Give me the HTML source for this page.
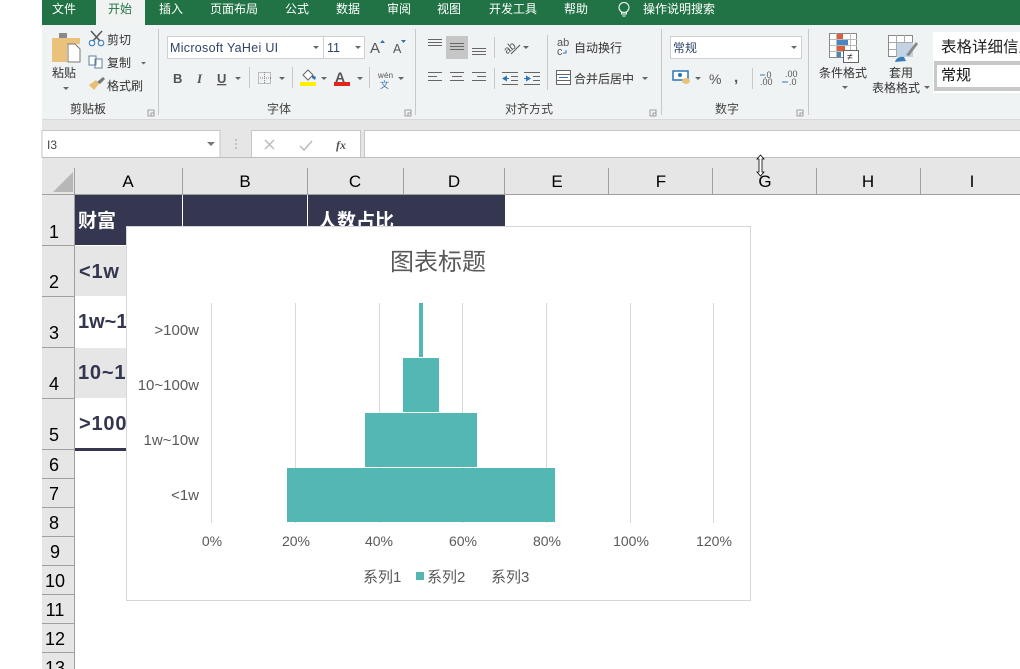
<!DOCTYPE html>
<html><head><meta charset="utf-8"><style>
html,body{margin:0;padding:0;background:#fff;width:1020px;height:669px;overflow:hidden}
svg{display:block}
text{font-family:"Liberation Sans","Noto Sans CJK SC",sans-serif;font-size:12px;fill:#444}
.tab{fill:#fff;font-size:12px;text-anchor:middle}
.s{font-size:12px;fill:#333}
.g{font-size:12px;fill:#444;text-anchor:middle}
.h{font-size:17px;fill:#000;text-anchor:middle}
.r{font-size:18px;fill:#000;text-anchor:middle}
.b{font-size:20px;font-weight:bold;fill:#33364f}
.c{font-size:15px;fill:#595959;text-anchor:end}
.x{font-size:14px;fill:#595959;text-anchor:middle}
.l{stroke:#666;stroke-width:1;fill:none}
.sep{stroke:#c8c8c8;stroke-width:1}
.hl{stroke:#9f9f9f;stroke-width:1}
.dd{fill:#666}
</style></head><body>
<svg width="1020" height="669" viewBox="0 0 1020 669" xmlns="http://www.w3.org/2000/svg">
<rect width="1020" height="669" fill="#fff"/>
<!-- title bar -->
<rect x="42" y="0" width="978" height="25" fill="#217346"/>
<rect x="96" y="0" width="49" height="25" fill="#f1f3f2"/>
<text class="tab" x="64" y="13">文件</text>
<text class="tab" x="120" y="13" style="fill:#217346">开始</text>
<text class="tab" x="171" y="13">插入</text>
<text class="tab" x="234" y="13">页面布局</text>
<text class="tab" x="297" y="13">公式</text>
<text class="tab" x="348" y="13">数据</text>
<text class="tab" x="399" y="13">审阅</text>
<text class="tab" x="449" y="13">视图</text>
<text class="tab" x="513" y="13">开发工具</text>
<text class="tab" x="576" y="13">帮助</text>
<circle cx="624" cy="7.500" r="5" fill="none" stroke="#fff"/><path d="M621.500 12v2h5v-2M622.500 16h3" stroke="#fff" fill="none"/>
<text class="tab" x="679" y="13">操作说明搜索</text>
<!-- ribbon -->
<rect x="42" y="25" width="978" height="94" fill="#f0f3f3"/>
<rect x="42" y="119" width="978" height="11" fill="#e6e6e6"/>
<line x1="42" y1="119.500" x2="1020" y2="119.500" stroke="#d8d8d8"/>
<g class="sep">
<line x1="158.500" y1="29" x2="158.500" y2="115"/><line x1="415.500" y1="29" x2="415.500" y2="115"/><line x1="661.500" y1="29" x2="661.500" y2="115"/><line x1="808.500" y1="29" x2="808.500" y2="115"/>
<line x1="249.500" y1="67" x2="249.500" y2="88"/><line x1="292.500" y1="67" x2="292.500" y2="88"/><line x1="369.500" y1="67" x2="369.500" y2="88"/>
<line x1="494.500" y1="37" x2="494.500" y2="58"/><line x1="494.500" y1="68" x2="494.500" y2="89"/><line x1="547.500" y1="35" x2="547.500" y2="90"/><line x1="752.500" y1="68" x2="752.500" y2="89"/>
</g>
<!-- clipboard -->
<path d="M52 38h7v-4h8v4h13v6H67v18H52z" fill="#eac27c"/><rect x="59" y="33" width="8" height="5" fill="#8a8a8a"/>
<path d="M68 44h7l5 5v13H68z" fill="#fff" stroke="#777"/>
<text class="s" x="64" y="77" text-anchor="middle" style="font-size:12px">粘贴</text>
<path d="M63 87h6l-3 3z" class="dd"/>
<path d="M91 31l9 10M102 31l-9 10" stroke="#555" stroke-width="1.500"/><circle cx="92" cy="43" r="2.800" fill="none" stroke="#2e75b6"/><circle cx="101" cy="43" r="2.800" fill="none" stroke="#2e75b6"/>
<text class="s" x="107" y="44">剪切</text>
<path d="M89 56h7v9h-7zM95 59h7v9h-7z" fill="#fff" stroke="#5f7f9f"/>
<text class="s" x="107" y="67">复制</text><path d="M141 62h5l-2.500 2.500z" class="dd"/>
<path d="M89 85l7-5 3 4-5 6z" fill="#e8c070"/><path d="M97 82l6-5 2 2-5 5z" fill="#777"/>
<text class="s" x="107" y="90">格式刷</text>
<text class="s" x="70" y="113">剪贴板</text>
<path d="M148 110h6v6h-6z M151 113h3v3h-3z" fill="none" stroke="#888" stroke-width=".8"/>
<!-- font -->
<rect x="167.500" y="36.500" width="156" height="22" fill="#fff" stroke="#d0d0d0"/>
<rect x="323.500" y="36.500" width="41" height="22" fill="#fff" stroke="#d0d0d0"/>
<text x="170" y="52" style="font-size:12.500px;fill:#2f4468;letter-spacing:.3px">Microsoft YaHei UI</text><path d="M313 46h6l-3 3z" class="dd"/>
<text x="327" y="52" style="font-size:12.500px;fill:#2f4468">11</text><path d="M355 46h6l-3 3z" class="dd"/>
<text x="370" y="53" style="font-size:15px;fill:#555">A</text><path d="M380 43h5l-2.500-3z" fill="#2e75b6"/>
<text x="393" y="53" style="font-size:12.500px;fill:#555">A</text><path d="M401 40h5l-2.500 3z" fill="#2e75b6"/>
<text x="173" y="83" style="font-size:13px;font-weight:bold;fill:#555">B</text>
<text x="197" y="83" style="font-size:13px;font-style:italic;font-family:'Liberation Serif',serif;fill:#555;font-weight:bold">I</text>
<text x="217" y="83" style="font-size:13px;fill:#555;font-weight:bold;text-decoration:underline">U</text>
<path d="M235 77h6l-3 3z M279 77h6l-3 3z M321 77h6l-3 3z M357 77h6l-3 3z M398 77h6l-3 3z" class="dd"/>
<rect x="258.500" y="72.500" width="12" height="11" fill="none" stroke="#888" stroke-dasharray="1 1"/><path d="M264.500 72v12M258 78h13" stroke="#888" stroke-dasharray="1 1"/>
<path d="M303 75l5-5 5 5-5 5z" fill="#fff" stroke="#666"/><path d="M312 75l4 2-1 3-3-2z" fill="#2e75b6"/>
<rect x="300" y="82" width="16" height="4" fill="#ffee00"/>
<text x="335" y="82" style="font-size:14px;font-weight:bold;fill:#555">A</text><rect x="334" y="82" width="16" height="4" fill="#e0261c"/>
<text x="378" y="78" style="font-size:8px;fill:#555;letter-spacing:.2px">wén</text><text x="380" y="88" style="font-size:9px;fill:#2e75b6">文</text>
<text class="g" x="279" y="113">字体</text>
<path d="M405 110h6v6h-6z M408 113h3v3h-3z" fill="none" stroke="#888" stroke-width=".8"/>
<!-- alignment -->
<rect x="446" y="36" width="22" height="23" fill="#c6c6c6"/>
<g class="l">
<path d="M428 39.500h14M428 42.500h14M428 45.500h14"/>
<path d="M450 43.500h14M450 46.500h14M450 49.500h14"/>
<path d="M472 48.500h14M472 51.500h14M472 54.500h14"/>
<path d="M428 72.500h14M428 76.500h9M428 80.500h14"/>
<path d="M450 72.500h14M452 76.500h10M450 80.500h14"/>
<path d="M472 72.500h14M477 76.500h9M472 80.500h14"/>
<path d="M502 72.500h16M511 76.500h7M511 80.500h7M502 84.500h16"/>
<path d="M524 72.500h16M533 76.500h7M533 80.500h7M524 84.500h16"/>
</g>
<path d="M502 78.500l5-3v6z" fill="#2e75b6"/><path d="M503 78h6v1h-6z" fill="#2e75b6"/>
<path d="M531 78.500l-5-3v6z" fill="#2e75b6"/><path d="M524 78h6v1h-6z" fill="#2e75b6"/>
<text x="503" y="51" style="font-size:11px;fill:#555" transform="rotate(-38 510 47)">ab</text><path d="M511 54l9-9" stroke="#555"/>
<path d="M523 46h6l-3 3z M642 77h6l-3 3z" class="dd"/>
<text x="557" y="46" style="font-size:11px;fill:#555">ab</text><text x="557" y="55" style="font-size:11px;fill:#555">c</text><path d="M566 50v3h-3" stroke="#2e75b6" fill="none"/>
<text class="s" x="574" y="52">自动换行</text>
<rect x="556.500" y="70.500" width="14" height="14" fill="#fff" stroke="#666"/><path d="M557 74.500h13M557 80.500h13" stroke="#666"/><path d="M559 77.500h9" stroke="#2e75b6"/>
<text class="s" x="574" y="83">合并后居中</text>
<text class="g" x="529" y="113">对齐方式</text>
<path d="M650 110h6v6h-6z M653 113h3v3h-3z" fill="none" stroke="#888" stroke-width=".8"/>
<!-- number -->
<rect x="670.500" y="36.500" width="131" height="22" fill="#fff" stroke="#d0d0d0"/>
<text x="673" y="52" style="fill:#2f4468">常规</text><path d="M791 46h6l-3 3z" class="dd"/>
<rect x="673" y="71" width="15" height="9" fill="#fff" stroke="#2e75b6" stroke-width="1.500"/><circle cx="680" cy="75" r="2" fill="#2e75b6"/><ellipse cx="686" cy="81" rx="4" ry="3" fill="#eac27c"/>
<path d="M695 77h6l-3 3z" class="dd"/>
<text x="709" y="84" style="font-size:14px;fill:#555">%</text>
<text x="734" y="82" style="font-size:15px;font-weight:bold;fill:#555">,</text>
<text x="764" y="78" style="font-size:9px;fill:#555">.0</text><text x="760" y="85" style="font-size:9px;fill:#555">.00</text><path d="M760 75h5" stroke="#2e75b6"/>
<text x="785" y="77" style="font-size:9px;fill:#555">.00</text><text x="789" y="85" style="font-size:9px;fill:#555">.0</text><path d="M782 82h6" stroke="#2e75b6"/>
<text class="g" x="727" y="113">数字</text>
<path d="M797 110h6v6h-6z M800 113h3v3h-3z" fill="none" stroke="#888" stroke-width=".8"/>
<!-- styles -->
<g>
<rect x="829.500" y="33.500" width="27" height="24" fill="#fff" stroke="#888"/>
<path d="M830 39.500h27M830 45.500h27M830 51.500h27M836.500 33v24M850.500 33v24" stroke="#bbb"/>
<rect x="837" y="34" width="6" height="5" fill="#d9603a"/><rect x="837" y="40" width="11" height="5" fill="#4a86c0"/><rect x="837" y="46" width="8" height="5" fill="#d9603a"/><rect x="837" y="52" width="4" height="5" fill="#4a86c0"/>
<rect x="843.500" y="50.500" width="15" height="12" fill="#fff" stroke="#666"/><text x="847" y="60" style="font-size:10px;fill:#333">≠</text>
</g>
<text class="s" x="843" y="77" text-anchor="middle">条件格式</text><path d="M842 86h6l-3 3z" class="dd"/>
<rect x="888.500" y="35.500" width="24" height="21" fill="#fff" stroke="#888"/>
<path d="M889 42.500h24M889 49.500h24M896.500 35v22M904.500 35v22" stroke="#aaa"/><rect x="897" y="43" width="16" height="14" fill="#c3d3e6"/>
<path d="M906 55l10-13 2 2-9 12z" fill="#888"/><path d="M895 62c1-4 5-6 9-5l2 4z" fill="#3b7db8"/>
<text class="s" x="901" y="77" text-anchor="middle">套用</text>
<text class="s" x="896" y="92" text-anchor="middle">表格格式</text><path d="M924 86h6l-3 3z" class="dd"/>
<rect x="933" y="32" width="87" height="61" fill="#fff"/>
<text x="941" y="52" style="font-size:15.500px;fill:#222">表格详细信息</text>
<rect x="934" y="61" width="86" height="4" fill="#c8c8c8"/><rect x="934" y="87" width="86" height="4" fill="#c8c8c8"/><rect x="934" y="61" width="3" height="30" fill="#c8c8c8"/>
<text x="941" y="80" style="font-size:15px;fill:#111">常规</text>
<!-- formula bar -->
<rect x="42" y="130" width="978" height="28" fill="#e6e6e6"/>
<rect x="42" y="130.500" width="178" height="27" fill="#fff" stroke="#c6c6c6"/>
<text x="47" y="149" style="font-size:12px;fill:#444">I3</text><path d="M207 142h8l-4 4z" fill="#777"/>
<path d="M236 139v2M236 143v2M236 147v2" stroke="#999"/>
<rect x="251.500" y="130.500" width="109" height="27" fill="#fff" stroke="#c6c6c6"/>
<path d="M265 140l9 9M274 140l-9 9" stroke="#bbb" stroke-width="1.500"/>
<path d="M300 146l4 4 8-9" stroke="#bbb" stroke-width="1.500" fill="none"/>
<text x="336" y="149" style="font-size:12px;font-style:italic;font-family:'Liberation Serif',serif;fill:#555;font-weight:bold">fx</text>
<rect x="364.500" y="130.500" width="660" height="27" fill="#fff" stroke="#c6c6c6"/>
<!-- column header -->
<rect x="42" y="158" width="978" height="37" fill="#e6e6e6"/>
<line x1="42" y1="157.500" x2="1020" y2="157.500" stroke="#bdbdbd"/>
<path d="M73 172v20H53z" fill="#b7b7b7"/>
<line x1="42" y1="194.500" x2="1020" y2="194.500" stroke="#a0a0a0"/>
<line x1="74.500" y1="168" x2="74.500" y2="669" stroke="#a0a0a0"/>
<g class="hl"><line x1="182.500" y1="168" x2="182.500" y2="195"/><line x1="307.500" y1="168" x2="307.500" y2="195"/><line x1="403.500" y1="168" x2="403.500" y2="195"/><line x1="504.500" y1="168" x2="504.500" y2="195"/><line x1="608.500" y1="168" x2="608.500" y2="195"/><line x1="712.500" y1="168" x2="712.500" y2="195"/><line x1="816.500" y1="168" x2="816.500" y2="195"/><line x1="920.500" y1="168" x2="920.500" y2="195"/></g>
<text class="h" x="128" y="187">A</text><text class="h" x="245" y="187">B</text><text class="h" x="355" y="187">C</text><text class="h" x="454" y="187">D</text><text class="h" x="557" y="187">E</text><text class="h" x="661" y="187">F</text><text class="h" x="765" y="187">G</text><text class="h" x="868" y="187">H</text><text class="h" x="972" y="187">I</text>
<!-- row header -->
<rect x="42" y="195" width="32" height="474" fill="#e6e6e6"/>
<g class="hl"><line x1="42" y1="245.500" x2="75" y2="245.500"/><line x1="42" y1="296.500" x2="75" y2="296.500"/><line x1="42" y1="347.500" x2="75" y2="347.500"/><line x1="42" y1="398.500" x2="75" y2="398.500"/><line x1="42" y1="449.500" x2="75" y2="449.500"/><line x1="42" y1="478.500" x2="75" y2="478.500"/><line x1="42" y1="507.500" x2="75" y2="507.500"/><line x1="42" y1="536.500" x2="75" y2="536.500"/><line x1="42" y1="565.500" x2="75" y2="565.500"/><line x1="42" y1="594.500" x2="75" y2="594.500"/><line x1="42" y1="623.500" x2="75" y2="623.500"/><line x1="42" y1="652.500" x2="75" y2="652.500"/></g>
<text class="r" x="54" y="238">1</text><text class="r" x="54" y="288">2</text><text class="r" x="54" y="339">3</text><text class="r" x="54" y="390">4</text><text class="r" x="54" y="441">5</text><text class="r" x="54" y="471">6</text><text class="r" x="54" y="500">7</text><text class="r" x="54" y="529">8</text><text class="r" x="55" y="558">9</text><text class="r" x="55" y="587">10</text><text class="r" x="55" y="616">11</text><text class="r" x="55" y="645">12</text><text class="r" x="55" y="674">13</text>
<!-- table -->
<rect x="75" y="195" width="430" height="50" fill="#353750"/>
<path d="M182.500 195v50M307.500 195v50" stroke="#fff"/>
<text x="78" y="227" style="font-size:19px;font-weight:bold;fill:#fff">财富</text>
<text x="318" y="227" style="font-size:19px;font-weight:bold;fill:#fff">人数占比</text>
<rect x="75" y="246" width="52" height="50" fill="#e6e6e6"/>
<rect x="75" y="348" width="52" height="50" fill="#e6e6e6"/>
<text class="b" x="79" y="278" style="letter-spacing:.8px">&lt;1w</text>
<text class="b" x="78" y="328">1w~1</text>
<text class="b" x="78" y="379" style="letter-spacing:.8px">10~1</text>
<text class="b" x="79" y="430" style="letter-spacing:.8px">&gt;100</text>
<rect x="75" y="448" width="52" height="3" fill="#353750"/>
<!-- chart -->
<rect x="126.500" y="226.500" width="624" height="374" fill="#fff" stroke="#d6d6d6"/>
<text x="438" y="270" style="font-size:24px;fill:#595959;text-anchor:middle">图表标题</text>
<g stroke="#d9d9d9"><line x1="211.500" y1="303" x2="211.500" y2="523"/><line x1="295.500" y1="303" x2="295.500" y2="523"/><line x1="379.500" y1="303" x2="379.500" y2="523"/><line x1="462.500" y1="303" x2="462.500" y2="523"/><line x1="546.500" y1="303" x2="546.500" y2="523"/><line x1="630.500" y1="303" x2="630.500" y2="523"/><line x1="713.500" y1="303" x2="713.500" y2="523"/></g>
<g fill="#53b8b4"><rect x="419" y="303" width="4" height="54"/><rect x="403" y="358" width="36" height="54"/><rect x="365" y="413" width="112" height="54"/><rect x="287" y="468" width="268" height="54"/></g>
<text class="c" x="199" y="335">&gt;100w</text><text class="c" x="199" y="390">10~100w</text><text class="c" x="199" y="445">1w~10w</text><text class="c" x="199" y="500">&lt;1w</text>
<text class="x" x="212" y="546">0%</text><text class="x" x="296" y="546">20%</text><text class="x" x="379" y="546">40%</text><text class="x" x="463" y="546">60%</text><text class="x" x="547" y="546">80%</text><text class="x" x="631" y="546">100%</text><text class="x" x="714" y="546">120%</text>
<text x="363" y="582" style="font-size:15px;fill:#595959">系列1</text>
<rect x="416" y="572" width="8" height="8" fill="#53b8b4"/>
<text x="427" y="582" style="font-size:15px;fill:#595959">系列2</text>
<text x="491" y="582" style="font-size:15px;fill:#595959">系列3</text>
<!-- cursor -->
<path d="M760.500 155l3.500 4h-2v13h2l-3.500 4-3.500-4h2v-13h-2z" fill="#fff" stroke="#000" stroke-width=".8"/>
</svg>
</body></html>
